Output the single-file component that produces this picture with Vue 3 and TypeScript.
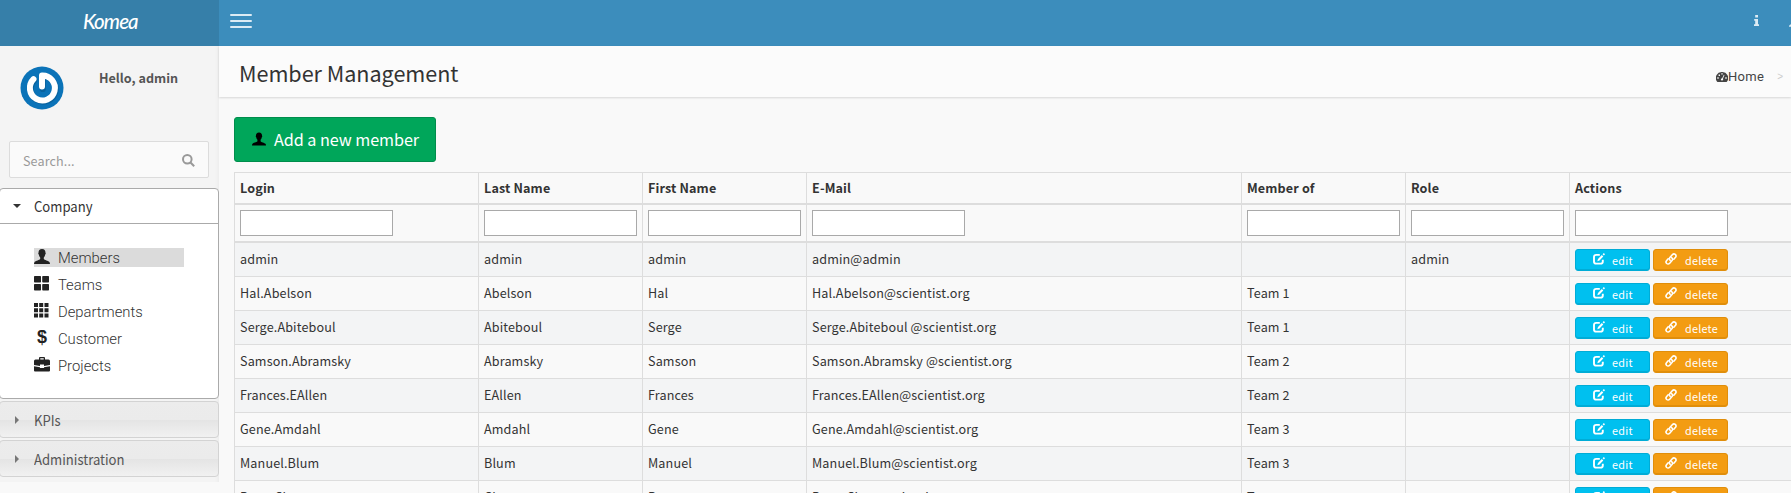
<script setup lang="ts">
interface Member {
  login: string
  last: string
  first: string
  mail: string
  team: string
  role: string
}

const columns = ['Login', 'Last Name', 'First Name', 'E-Mail', 'Member of', 'Role', 'Actions']

const members: Member[] = [
  { login: 'admin', last: 'admin', first: 'admin', mail: 'admin@admin', team: '', role: 'admin' },
  { login: 'Hal.Abelson', last: 'Abelson', first: 'Hal', mail: 'Hal.Abelson@scientist.org', team: 'Team 1', role: '' },
  { login: 'Serge.Abiteboul', last: 'Abiteboul', first: 'Serge', mail: 'Serge.Abiteboul @scientist.org', team: 'Team 1', role: '' },
  { login: 'Samson.Abramsky', last: 'Abramsky', first: 'Samson', mail: 'Samson.Abramsky @scientist.org', team: 'Team 2', role: '' },
  { login: 'Frances.EAllen', last: 'EAllen', first: 'Frances', mail: 'Frances.EAllen@scientist.org', team: 'Team 2', role: '' },
  { login: 'Gene.Amdahl', last: 'Amdahl', first: 'Gene', mail: 'Gene.Amdahl@scientist.org', team: 'Team 3', role: '' },
  { login: 'Manuel.Blum', last: 'Blum', first: 'Manuel', mail: 'Manuel.Blum@scientist.org', team: 'Team 3', role: '' },
  { login: 'Peter.Chen', last: 'Chen', first: 'Peter', mail: 'Peter.Chen@scientist.org', team: 'Team 3', role: '' },
]

const userPath =
  'M8 0C5.6 0 4.5 1.500 4.500 3.700C4.100 3.900 4.200 5.200 4.800 5.500C5 6.800 5.500 7.700 6.200 8.400V10C5.800 11 1.500 11.800.6 13C.2 13.500 0 14.200 0 15H16C16 14.200 15.800 13.500 15.400 13C14.500 11.800 10.200 11 9.800 10V8.400C10.500 7.700 11 6.800 11.200 5.500C11.800 5.200 11.900 3.900 11.500 3.700C11.500 1.500 10.400 0 8 0Z'

const menu = [
  { label: 'Members', path: userPath },
  { label: 'Teams', path: 'M.8 0H6.300Q7 0 7 .7V5.800Q7 6.500 6.300 6.500H.8Q0 6.500 0 5.800V.7Q0 0 .8 0ZM9 0H14.300Q15 0 15 .7V5.800Q15 6.500 14.300 6.500H9Q8.200 6.500 8.200 5.800V.7Q8.200 0 9 0ZM.8 8H6.300Q7 8 7 8.700V13.700Q7 14.500 6.300 14.500H.8Q0 14.500 0 13.700V8.700Q0 8 .8 8ZM9 8H14.300Q15 8 15 8.700V13.700Q15 14.500 14.300 14.500H9Q8.200 14.500 8.200 13.700V8.700Q8.200 8 9 8Z' },
  { label: 'Departments', path: 'M0 0H4V4H0ZM5.200 0H9.200V4H5.200ZM10.500 0H14.500V4H10.500ZM0 5.200H4V9.200H0ZM5.200 5.200H9.200V9.200H5.200ZM10.500 5.200H14.500V9.200H10.500ZM0 10.500H4V14.500H0ZM5.200 10.500H9.200V14.500H5.200ZM10.500 10.500H14.500V14.500H10.500Z' },
  { label: 'Customer', path: '' },
  { label: 'Projects', path: 'M5 2.500V1Q5 0 6 0H10Q11 0 11 1V2.500H14.500Q16 2.500 16 4V8L10 9V7.500H6V9L0 8V4Q0 2.500 1.500 2.500ZM6.300 2.500H9.700V1.300H6.300ZM0 9.200L6 10.200V11H10V10.200L16 9.200V13.500Q16 14.500 15 14.500H1Q0 14.500 0 13.500Z' },
]
</script>

<template>
  <div class="page">
    <header class="topbar">
      <div class="brand">Komea</div>
      <div class="burger"><i></i><i></i><i></i></div>
      <div class="tools">
        <svg class="info" viewBox="0 0 5 11"><path d="M1.200 0H4V2.600H1.200ZM.2 4H4V9.200H5V11H0V9.200H1.200V5.800H.2Z" /></svg>
        <svg class="person" viewBox="0 0 16 15"><path :d="userPath" /></svg>
      </div>
    </header>

    <div class="columns">
      <aside class="sidebar">
        <div class="profile">
          <svg class="avatar" viewBox="0 0 44 44">
            <circle cx="22" cy="22" r="21.500" fill="#0b73b8" />
            <path d="M13.500 13.200A12.500 12.500 0 1 0 22 9.500V22" fill="none" stroke="#085386" stroke-opacity=".5" stroke-width="6.200" stroke-linecap="round" transform="translate(.8 1)" />
            <path d="M13.500 13.200A12.500 12.500 0 1 0 22 9.500V20.500" fill="none" stroke="#fff" stroke-width="6" stroke-linecap="round" stroke-linejoin="round" />
          </svg>
          <span class="hello">Hello, admin</span>
        </div>
        <div class="search">
          <span>Search...</span>
          <svg viewBox="0 0 13 13"><circle cx="5.300" cy="5.300" r="4.300" /><path d="M8.500 8.500L12.200 12.200" /></svg>
        </div>
        <nav>
          <div class="panel">
            <div class="panel-head">
              <svg class="down" viewBox="0 0 8 4"><path d="M0 0H8L4 4Z" /></svg>
              <span>Company</span>
            </div>
            <ul>
              <li v-for="(item, i) in menu" :key="item.label" :class="{ current: i === 0 }">
                <svg v-if="item.path" viewBox="0 0 16 16"><path fill-rule="evenodd" :d="item.path" /></svg>
                <b v-else>$</b>
                <span>{{ item.label }}</span>
              </li>
            </ul>
          </div>
          <div class="folded">
            <svg viewBox="0 0 4 8"><path d="M0 0V8L4 4Z" /></svg>
            <span>KPIs</span>
          </div>
          <div class="folded">
            <svg viewBox="0 0 4 8"><path d="M0 0V8L4 4Z" /></svg>
            <span>Administration</span>
          </div>
        </nav>
      </aside>

      <main>
        <div class="title-bar">
          <h1>Member Management</h1>
          <div class="crumbs">
            <svg viewBox="0 0 12 10"><path fill-rule="evenodd" d="M6 0A6 6 0 0 0 .8 9.300Q1 10 1.600 10H10.400Q11 10 11.200 9.300A6 6 0 0 0 6 0ZM1.300 5.300H2.700V6.700H1.300ZM2.600 2.600H4V4H2.600ZM5.300 1.200H6.700V2.600H5.300ZM9.300 5.300H10.700V6.700H9.300ZM7.800 2.800L8.500 3.100L7 6.500Q7.600 8.500 6 8.500Q4.500 8.300 5 6.900Q5.400 6.100 6.200 6.200Z" /></svg>
            <span>Home</span><em>&gt;</em><span class="here">Members</span>
          </div>
        </div>

        <section>
          <button class="add">
            <svg viewBox="0 0 16 15"><path :d="userPath" /></svg>
            <span>Add a new member</span>
          </button>

          <div class="table">
            <div class="row head"><div v-for="c in columns" :key="c">{{ c }}</div></div>
            <div class="row filters"><div v-for="c in columns" :key="c"><input type="text" /></div></div>
            <div v-for="m in members" :key="m.login" class="row data">
              <div>{{ m.login }}</div>
              <div>{{ m.last }}</div>
              <div>{{ m.first }}</div>
              <div>{{ m.mail }}</div>
              <div>{{ m.team }}</div>
              <div>{{ m.role }}</div>
              <div class="actions">
                <button class="edit">
                  <svg viewBox="0 0 12 12"><path d="M6.800 1.900H3.200Q1 1.900 1 4V8.400Q1 10.600 3.200 10.600H7.600Q9.800 10.600 9.800 8.400V6.800" fill="none" stroke="#fff" stroke-width="1.900" /><path d="M4.300 8.200L5 5.900L8.800 2.100L10.300 3.600L6.500 7.500ZM9.600 1.300L10.900 0L12 1.300L10.900 2.600Z" fill="#fff" /></svg>
                  <span>edit</span>
                </button>
                <button class="delete">
                  <svg viewBox="0 0 12 12"><g fill="none" stroke="#fff" stroke-width="1.600" stroke-linecap="round"><path d="M5.200 7.300Q3.600 5.900 4.900 4.400L7.300 1.700Q8.700 .3 10.300 1.400Q11.700 2.800 10.500 4.300L8.800 6.200" /><path d="M6.600 4.700Q8.300 6 7 7.600L4.700 10.200Q3.200 11.700 1.700 10.500Q.3 9.200 1.500 7.700L3.200 5.800" /></g></svg>
                  <span>delete</span>
                </button>
              </div>
            </div>
          </div>
        </section>
      </main>
    </div>
  </div>
</template>

<style>
body { margin: 0; overflow: hidden; }
</style>

<style scoped>
* { box-sizing: border-box; }
.page {
  width: 100%;
  height: 493px;
  overflow: hidden;
  background: #f9f9f9;
  color: #333;
  font: 12.6px/20px "Noto Sans CJK SC", sans-serif;
  letter-spacing: .13px;
  white-space: nowrap;
}
.topbar { display: flex; height: 46px; background: #3c8dbc; }
.brand {
  width: 219px;
  padding: 8px 0 0 83px;
  background: #367fa9;
  color: #fff;
  font: italic 500 20.500px/26px Lato, sans-serif;
  letter-spacing: -.9px;
}
.burger { display: flex; flex-direction: column; gap: 4px; padding: 14px 0 0 11px; }
.burger i { width: 22px; height: 2px; background: #dcebf4; border-radius: 1px; }
.tools { display: flex; margin-left: auto; width: 37px; overflow: hidden; padding-top: 15px; }
.tools svg { flex: none; fill: #dcebf4; }
.info { width: 5px; height: 11px; }
.person { width: 12px; height: 12px; margin-left: 30px; }
.columns { display: flex; align-items: flex-start; height: 447px; }
.sidebar { flex: none; width: 219px; height: 436px; background: #f4f4f4; box-shadow: inset -4px 0 5px -4px rgba(0, 0, 0, .06); }
.profile { display: flex; align-items: flex-start; height: 95px; padding: 20px 0 0 20px; }
.avatar { width: 44px; height: 44px; }
.hello { margin: 2px 0 0 35px; font-weight: 700; color: #555; letter-spacing: 0; }
.search {
  display: flex;
  align-items: center;
  justify-content: space-between;
  width: 200px;
  height: 37px;
  margin-left: 9px;
  padding: 2px 13px 0 13px;
  border: 1px solid #dcdcdc;
  border-radius: 2px;
  background: #fafafa;
  color: #999;
}
.search span { letter-spacing: .1px; }
.search svg { width: 13px; height: 13px; fill: none; stroke: #999; stroke-width: 2; }
nav { margin-top: 10px; font-size: 14.400px; }
.panel { height: 211px; margin-left: -1px; border: 1px solid #aaa; border-radius: 4px; background: #fff; }
.panel-head { display: flex; align-items: center; height: 35px; padding-left: 13px; border-bottom: 1px solid #aaa; color: #333; }
.panel-head .down { width: 8px; height: 4px; margin: 0 13px 0 0; fill: #333; }
nav span { transform: scaleX(.91); transform-origin: 0 50%; letter-spacing: 0; }
ul { display: flex; flex-direction: column; gap: 8px; margin: 0; padding: 24px 0 0 34px; list-style: none; }
li { display: flex; width: 150px; height: 19px; font: 300 14.800px/20px Roboto, "Liberation Sans", sans-serif; color: #333; }
li.current { background: #dbdbdb; }
li svg { width: 16px; height: 16px; margin: 1px 8px 0 0; fill: #222; }
li b { width: 16px; margin: -2px 8px 0 0; text-align: center; font: 700 18px/20px "Liberation Sans", sans-serif; color: #222; }
li span { transform: none; }
.folded {
  display: flex;
  align-items: center;
  height: 37px;
  margin: 2px 0 0 -1px;
  padding-left: 15px;
  border: 1px solid #d3d3d3;
  border-radius: 4px;
  background: linear-gradient(#ececec 0, #ebebeb 50%, #e4e4e4 51%, #f1f1f1 100%);
  color: #555;
}
.folded svg { width: 4px; height: 8px; margin-right: 15px; fill: #777; }
main { flex: 1; min-width: 0; }
.title-bar {
  display: flex;
  justify-content: space-between;
  height: 51px;
  padding-left: 20px;
  background: #fbfbfb;
  box-shadow: 0 1px 2px rgba(0, 0, 0, .14);
}
h1 { margin: 0; padding-top: 10px; font-size: 21.600px; line-height: 34px; font-weight: 400; letter-spacing: -.04px; }
.crumbs { display: flex; flex: none; width: 75px; overflow: hidden; padding-top: 20px; font: 13px/22px Roboto, "Liberation Sans", sans-serif; color: #444; letter-spacing: .3px; }
.crumbs svg { flex: none; width: 12px; height: 10px; margin-top: 6px; fill: #444; }
.crumbs em { margin: 0 8px 0 13px; font: 10px/22px "Liberation Sans", sans-serif; color: #ccc; }
.crumbs .here { color: #bbb; }
section { padding: 20px 0 0 15px; }
button { display: flex; align-items: center; margin: 0; color: #fff; font-family: inherit; border-radius: 3px; white-space: nowrap; }
.add { width: 202px; height: 45px; padding: 0 0 1px 17px; border: 1px solid #008d4c; background: #00a65a; font-size: 16.200px; letter-spacing: -.06px; }
.add svg { width: 14px; height: 14px; margin-right: 8px; }
.table { margin-top: 10px; border-top: 1px solid #ddd; }
.row { display: grid; grid-template-columns: 244px 164px 164px 435px 164px 164px 1fr; border-bottom: 1px solid #ddd; }
.row > div { border-left: 1px solid #ddd; padding-left: 5px; }
.head { height: 32px; border-bottom-width: 2px; font-weight: 700; line-height: 30px; }
.filters { height: 38px; border-bottom-width: 2px; }
.filters > div { padding-top: 5px; }
input { display: block; width: 153px; height: 26px; margin: 0; padding: 0; border: 1px solid #a9a9a9; background: #fff; }
.data { height: 34px; line-height: 32px; }
.data:nth-child(odd) { background: #f3f4f5; }
.data .actions { display: flex; gap: 3px; padding-top: 6px; }
.actions button { width: 75px; height: 22px; padding: 0; font-size: 10.800px; letter-spacing: .25px; }
.actions svg { width: 12px; height: 12px; margin-top: -2px; }
.edit { background: #00c0ef; border: 1px solid #00acd6; box-shadow: inset 0 -1px #00acd6; }
.edit svg { margin-left: 17px; margin-right: 7px; }
.delete { background: #f39c12; border: 1px solid #e08e0b; box-shadow: inset 0 -1px #e08e0b; }
.delete svg { margin-left: 11px; margin-right: 8px; }
</style>
